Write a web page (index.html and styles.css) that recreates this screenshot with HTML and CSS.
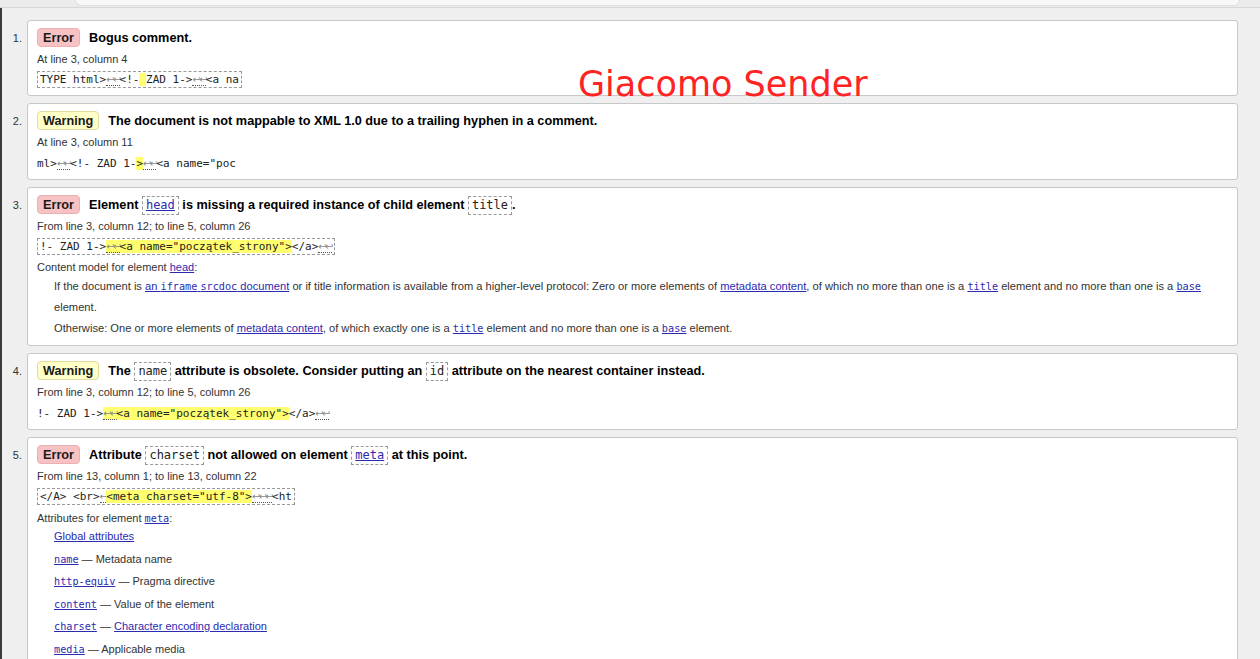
FILE: index.html
```html
<!DOCTYPE html>
<html lang="en">
<head>
<meta charset="utf-8">
<title>Validation results</title>
<link rel="stylesheet" href="styles.css">
</head>
<body>
<div class="topbar"><div class="topbox"></div></div>
<main class="results">
  <ol class="messages">
    <li class="item">
      <span class="num">1.</span>
      <div class="card">
        <p class="title"><strong class="badge error">Error</strong>Bogus comment.</p>
        <p class="location">At line 3, column 4</p>
        <p class="extract"><code class="boxed">TYPE html&gt;<span class="lf">↩↩</span>&lt;!-<mark> </mark>ZAD 1-&gt;<span class="lf">↩↩</span>&lt;a na</code></p>
      </div>
    </li>
    <li class="item">
      <span class="num">2.</span>
      <div class="card">
        <p class="title"><strong class="badge warning">Warning</strong>The document is not mappable to XML 1.0 due to a trailing hyphen in a comment.</p>
        <p class="location">At line 3, column 11</p>
        <p class="extract"><code class="plain">ml&gt;<span class="lf">↩↩</span>&lt;!- ZAD 1-<mark>&gt;</mark><span class="lf">↩↩</span>&lt;a name="poc</code></p>
      </div>
    </li>
    <li class="item">
      <span class="num">3.</span>
      <div class="card">
        <p class="title"><strong class="badge error">Error</strong>Element <code class="tcode"><a href="#">head</a></code> is missing a required instance of child element <code class="tcode">title</code>.</p>
        <p class="location">From line 3, column 12; to line 5, column 26</p>
        <p class="extract"><code class="boxed">!- ZAD 1-&gt;<mark><span class="lf">↩↩</span>&lt;a name="początek_strony"&gt;</mark>&lt;/a&gt;<span class="lf">↩↩</span></code></p>
        <p class="model model-head">Content model for element <a href="#">head</a>:</p>
        <div class="model-desc">
          <p>If the document is <a href="#">an <code>iframe</code> <code>srcdoc</code> document</a> or if title information is available from a higher-level protocol: Zero or more elements of <a href="#">metadata content</a>, of which no more than one is a <a href="#"><code>title</code></a> element and no more than one is a <a href="#"><code>base</code></a> element.</p>
          <p>Otherwise: One or more elements of <a href="#">metadata content</a>, of which exactly one is a <a href="#"><code>title</code></a> element and no more than one is a <a href="#"><code>base</code></a> element.</p>
        </div>
      </div>
    </li>
    <li class="item">
      <span class="num">4.</span>
      <div class="card">
        <p class="title"><strong class="badge warning">Warning</strong>The <code class="tcode">name</code> attribute is obsolete. Consider putting an <code class="tcode">id</code> attribute on the nearest container instead.</p>
        <p class="location">From line 3, column 12; to line 5, column 26</p>
        <p class="extract"><code class="plain">!- ZAD 1-&gt;<mark><span class="lf">↩↩</span>&lt;a name="początek_strony"&gt;</mark>&lt;/a&gt;<span class="lf">↩↩</span></code></p>
      </div>
    </li>
    <li class="item">
      <span class="num">5.</span>
      <div class="card">
        <p class="title"><strong class="badge error">Error</strong>Attribute <code class="tcode">charset</code> not allowed on element <code class="tcode"><a href="#">meta</a></code> at this point.</p>
        <p class="location">From line 13, column 1; to line 13, column 22</p>
        <p class="extract"><code class="boxed">&lt;/A&gt; &lt;br&gt;<span class="lf">↩</span><mark>&lt;meta charset="utf-8"&gt;</mark><span class="lf">↩↩↩</span>&lt;ht</code></p>
        <p class="model">Attributes for element <a href="#"><code>meta</code></a>:</p>
        <ul class="attrs">
          <li><a href="#">Global attributes</a></li>
          <li><a href="#"><code>name</code></a> — Metadata name</li>
          <li><a href="#"><code>http-equiv</code></a> — Pragma directive</li>
          <li><a href="#"><code>content</code></a> — Value of the element</li>
          <li><a href="#"><code>charset</code></a> — <a href="#">Character encoding declaration</a></li>
          <li><a href="#"><code>media</code></a> — Applicable media</li>
        </ul>
      </div>
    </li>
  </ol>
</main>
<p class="watermark">Giacomo Sender</p>
</body>
</html>
```
FILE: styles.css
```css
html, body {
  margin: 0;
  height: 659px;
  overflow: hidden;
}
body {
  background: #efefef;
  font-family: "Liberation Sans", Arial, sans-serif;
  color: #333;
}
.topbar {
  height: 7px;
  background: #ececec;
  border-bottom: 1px solid #d6d6d6;
}
.topbox {
  margin-left: 75px;
  width: 1165px;
  height: 6px;
  box-sizing: border-box;
  background: #f8f8f8;
  border: 1px solid #e0e0e0;
  border-top: 0;
  border-radius: 0 0 10px 10px;
}
.results {
  border-left: 2px solid #3a3a3a;
  padding: 12px 22px 0 0;
  min-height: 800px;
}
.messages {
  list-style: none;
  margin: 0;
  padding: 0;
  display: flex;
  flex-direction: column;
  gap: 7px;
}
.item {
  display: flex;
}
.num {
  flex: none;
  width: 25px;
  box-sizing: border-box;
  padding: 9px 5px 0 0;
  text-align: right;
  font-size: 11px;
  line-height: 19px;
  color: #333;
}
.card {
  flex: 1;
  background: #fff;
  border: 1px solid #c8c8c8;
  border-radius: 3px;
  padding: 7px 10px 7px 9px;
}
.title {
  margin: 0;
  height: 19px;
  font-size: 12.7px;
  font-weight: bold;
  line-height: 21px;
  color: #000;
}
.badge {
  display: inline-block;
  vertical-align: top;
  line-height: 16px;
  padding: 1px 5px 0;
  border: 1px solid;
  border-radius: 4px;
  margin-right: 9px;
  color: #1a1a1a;
}
.badge.error {
  background: #f7c2c4;
  border-color: #ecb0b2;
}
.badge.warning {
  background: #ffffc8;
  border-color: #e2dca0;
}
.tcode {
  display: inline-block;
  vertical-align: top;
  margin-top: 1px;
  font: 12px/17px "DejaVu Sans Mono", monospace;
  color: #222;
  border: 1px dashed #999;
  padding: 0 3px;
}
.location {
  margin: 2px 0 0;
  font-size: 11px;
  line-height: 20px;
}
.extract {
  margin: 2px 0 0;
  display: flex;
}
.extract code {
  height: 15px;
  font: 11px/15px "DejaVu Sans Mono", monospace;
  white-space: pre;
  color: #222;
  border: 1px dashed #999;
  padding: 0 2px;
}
.extract code.plain {
  border-color: transparent;
  border-left: 0;
  border-right: 0;
  padding: 1px 0 0;
}
mark {
  background: #ffff70;
  color: inherit;
}
.lf {
  font-family: "DejaVu Sans", sans-serif;
  font-size: 10px;
  line-height: 9px;
  letter-spacing: -1.7px;
  color: #8a8a8a;
  border-bottom: 1px dotted #555;
}
.model {
  margin: 4px 0 0;
  font-size: 11px;
  line-height: 18px;
}
.model-head {
  line-height: 17px;
}
.model-desc {
  padding-left: 17px;
  margin-bottom: -1px;
  font-size: 11.15px;
  line-height: 21px;
}
.model-desc p {
  margin: 0;
}
.attrs {
  list-style: none;
  margin: -2px 0 0;
  padding-left: 17px;
  font-size: 11px;
  line-height: 22.6px;
}
a {
  color: #2b2bb0;
  text-decoration: underline;
}
a code,
.model code {
  font: 10.2px/1 "DejaVu Sans Mono", monospace;
}
.tcode a {
  font: inherit;
}
.watermark {
  position: absolute;
  left: 578px;
  top: 67px;
  margin: 0;
  font: 35px/1 "DejaVu Sans", sans-serif;
  color: #ff2323;
  white-space: nowrap;
}
```
